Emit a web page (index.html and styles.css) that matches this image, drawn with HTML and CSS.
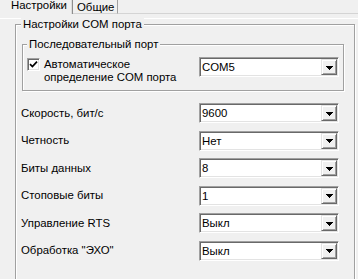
FILE: index.html
```html
<!DOCTYPE html>
<html lang="ru">
<head>
<meta charset="utf-8">
<title>Настройки COM порта</title>
<link rel="stylesheet" href="styles.css">
</head>
<body>
<div class="tabs">
  <div class="tab tab-active">Настройки</div>
  <div class="tab tab-idle">Общие</div>
  <div class="tab-fill"></div>
</div>
<div class="panel">
  <fieldset class="group group-outer">
    <legend class="group-title">Настройки COM порта</legend>
    <fieldset class="group group-inner">
      <legend class="group-title">Последовательный порт</legend>
      <div class="port-row">
        <label class="check">
          <span class="check-box">
            <svg class="check-mark" viewBox="0 0 9 9" width="9" height="9"><path d="M1 4.2 L3.4 6.6 L8 1.6" fill="none" stroke="#000" stroke-width="1.7"/></svg>
          </span>
          <span class="check-text">Автоматическое<br>определение COM порта</span>
        </label>
        <div class="combo"><span class="combo-value">COM5</span><span class="combo-btn"><svg class="combo-arrow" viewBox="0 0 7 4" width="7" height="4" shape-rendering="crispEdges"><path d="M0 0h7v1H0z M1 1h5v1H1z M2 2h3v1H2z M3 3h1v1H3z" fill="#000"/></svg></span></div>
      </div>
    </fieldset>
    <div class="form">
      <span class="form-label">Скорость, бит/с</span>
      <div class="combo"><span class="combo-value">9600</span><span class="combo-btn"><svg class="combo-arrow" viewBox="0 0 7 4" width="7" height="4" shape-rendering="crispEdges"><path d="M0 0h7v1H0z M1 1h5v1H1z M2 2h3v1H2z M3 3h1v1H3z" fill="#000"/></svg></span></div>
      <span class="form-label">Четность</span>
      <div class="combo"><span class="combo-value">Нет</span><span class="combo-btn"><svg class="combo-arrow" viewBox="0 0 7 4" width="7" height="4" shape-rendering="crispEdges"><path d="M0 0h7v1H0z M1 1h5v1H1z M2 2h3v1H2z M3 3h1v1H3z" fill="#000"/></svg></span></div>
      <span class="form-label">Биты данных</span>
      <div class="combo"><span class="combo-value">8</span><span class="combo-btn"><svg class="combo-arrow" viewBox="0 0 7 4" width="7" height="4" shape-rendering="crispEdges"><path d="M0 0h7v1H0z M1 1h5v1H1z M2 2h3v1H2z M3 3h1v1H3z" fill="#000"/></svg></span></div>
      <span class="form-label">Стоповые биты</span>
      <div class="combo"><span class="combo-value">1</span><span class="combo-btn"><svg class="combo-arrow" viewBox="0 0 7 4" width="7" height="4" shape-rendering="crispEdges"><path d="M0 0h7v1H0z M1 1h5v1H1z M2 2h3v1H2z M3 3h1v1H3z" fill="#000"/></svg></span></div>
      <span class="form-label">Управление RTS</span>
      <div class="combo"><span class="combo-value">Выкл</span><span class="combo-btn"><svg class="combo-arrow" viewBox="0 0 7 4" width="7" height="4" shape-rendering="crispEdges"><path d="M0 0h7v1H0z M1 1h5v1H1z M2 2h3v1H2z M3 3h1v1H3z" fill="#000"/></svg></span></div>
      <span class="form-label">Обработка "ЭХО"</span>
      <div class="combo"><span class="combo-value">Выкл</span><span class="combo-btn"><svg class="combo-arrow" viewBox="0 0 7 4" width="7" height="4" shape-rendering="crispEdges"><path d="M0 0h7v1H0z M1 1h5v1H1z M2 2h3v1H2z M3 3h1v1H3z" fill="#000"/></svg></span></div>
    </div>
  </fieldset>
</div>
</body>
</html>
```
FILE: styles.css
```css
html, body {
  margin: 0;
  padding: 0;
  background: #f0f0f0;
  overflow: hidden;
}
body {
  width: 358px;
  height: 279px;
  font-family: "Liberation Sans", Arial, sans-serif;
  font-size: 11.4px;
  line-height: 13px;
  color: #000;
}
.tabs {
  display: flex;
  align-items: flex-end;
  height: 14px;
}
.tab {
  box-sizing: border-box;
  white-space: nowrap;
}
.tab-active {
  width: 73px;
  height: 15px;
  padding-left: 11px;
  border-right: 1px solid #8e8e8e;
  box-shadow: inset -1px 0 0 #dcdcdc;
  background: #f0f0f0;
}
.tab-idle {
  width: 45px;
  height: 14px;
  padding: 1px 0 0 4px;
  border-right: 1px solid #a0a0a0;
  border-bottom: 1px solid #d4d4d4;
}
.tab-fill {
  flex: 1;
  height: 14px;
  border-bottom: 1px solid #d4d4d4;
}
.panel {
  box-shadow: inset 0 1px 0 #fff;
}
.group {
  margin: 0;
  border: 1px solid #a0a0a0;
  box-shadow: inset 1px 1px 0 #fff, 1px 1px 0 #fff;
  min-width: 0;
}
.group-title {
  padding: 0 2px;
  line-height: 13px;
  background: #f0f0f0;
}
.group-outer {
  margin: 4px 3px 0 15px;
  padding: 0 10px 40px 5px;
}
.group-inner {
  margin: 7px 0 0 1px;
  padding: 0 4px 6px 4px;
}
.port-row {
  display: flex;
  align-items: flex-start;
  padding-top: 6px;
}
.check {
  flex: 1;
  display: flex;
  align-items: flex-start;
  margin-top: 1px;
}
.check-box {
  box-sizing: border-box;
  width: 13px;
  height: 13px;
  flex: none;
  background: #fff;
  border: 1px solid;
  border-color: #a0a0a0 #fff #fff #a0a0a0;
  box-shadow: inset 1px 1px 0 #696969, inset -1px -1px 0 #e3e3e3;
  display: flex;
  align-items: center;
  justify-content: center;
}
.check-mark {
  display: block;
}
.check-text {
  margin-left: 4px;
}
.combo {
  box-sizing: border-box;
  width: 140px;
  height: 20px;
  flex: none;
  display: flex;
  align-items: stretch;
  background: #fff;
  border: 1px solid;
  border-color: #a0a0a0 #fff #fff #a0a0a0;
  box-shadow: inset 1px 1px 0 #696969, inset -1px -1px 0 #e3e3e3;
  padding: 1px;
}
.combo-value {
  flex: 1;
  padding-left: 1px;
  line-height: 16px;
  white-space: nowrap;
}
.combo-btn {
  box-sizing: border-box;
  width: 16px;
  display: flex;
  align-items: center;
  justify-content: center;
  background: #f0f0f0;
  border: 1px solid;
  border-color: #e3e3e3 #696969 #696969 #e3e3e3;
  box-shadow: inset 1px 1px 0 #fff, inset -1px -1px 0 #a0a0a0;
}
.combo-arrow {
  display: block;
  margin-top: 1px;
}
.form {
  display: grid;
  grid-template-columns: 178px 140px;
  grid-auto-rows: 20px;
  row-gap: 7.5px;
  align-items: center;
  margin-top: 12px;
}
.form-label {
  white-space: nowrap;
}
```
